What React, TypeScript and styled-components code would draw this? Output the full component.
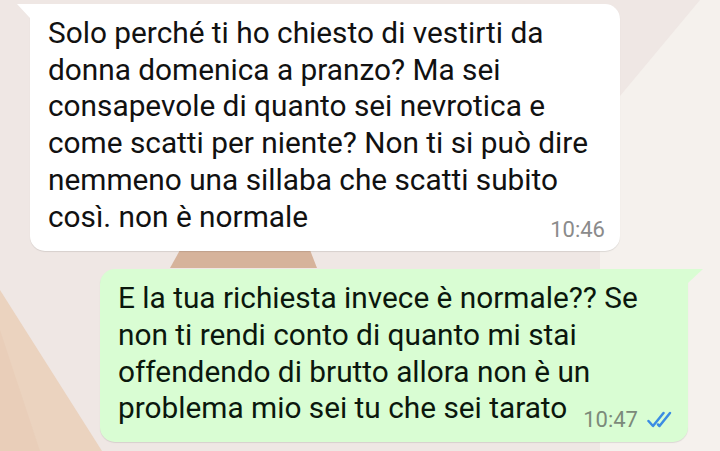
import React from "react";
import styled, { createGlobalStyle } from "styled-components";

const GlobalStyle = createGlobalStyle`
  html, body {
    margin: 0;
    padding: 0;
  }
  body {
    background: #efe7e4;
    font-family: Roboto, "Noto Sans", Arial, sans-serif;
    overflow: hidden;
  }
`;

const incoming = [
  "Solo perché ti ho chiesto di vestirti da",
  "donna domenica a pranzo? Ma sei",
  "consapevole di quanto sei nevrotica e",
  "come scatti per niente? Non ti si può dire",
  "nemmeno una sillaba che scatti subito",
  "così. non è normale",
];

const outgoing = [
  "E la tua richiesta invece è normale?? Se",
  "non ti rendi conto di quanto mi stai",
  "offendendo di brutto allora non è un",
  "problema mio sei tu che sei tarato",
];

const Wallpaper = () => (
  <Paper viewBox="0 0 720 451" preserveAspectRatio="none">
    <polygon points="700,0 720,0 720,451 600,451 600,120" fill="#f5f1ed" />
    <polygon points="180,250 310,250 317,268 170,268" fill="#d6b39b" />
    <polygon points="0,290 0,451 102,451" fill="#ebd3bf" />
    <polygon points="0,330 0,451 40,451" fill="#e7ccb6" opacity="0.6" />
  </Paper>
);

const DoubleCheck = () => (
  <Ticks viewBox="0 0 28 18">
    <polyline points="1.5,10 6,15 16.5,2" />
    <polyline points="11,13.5 12.5,15 23,2" />
  </Ticks>
);

type BubbleProps = { lines: string[]; time: string; out?: boolean };

const Bubble: React.FC<BubbleProps> = ({ lines, time, out }) => {
  const head = lines.slice(0, -1);
  const last = lines[lines.length - 1];
  return (
    <Row $out={out}>
      <Box $out={out}>
        {head.map((l) => (
          <Line key={l}>{l}</Line>
        ))}
        <LastLine>
          <Line>{last}</Line>
          <Meta $out={out}>
            <Time>{time}</Time>
            {out && <DoubleCheck />}
          </Meta>
        </LastLine>
      </Box>
    </Row>
  );
};

export default function App() {
  return (
    <>
      <GlobalStyle />
      <Screen>
        <Wallpaper />
        <Chat>
          <Bubble lines={incoming} time="10:46" />
          <Bubble lines={outgoing} time="10:47" out />
        </Chat>
      </Screen>
    </>
  );
}

const Screen = styled.div`
  position: relative;
  width: 720px;
  height: 451px;
  overflow: hidden;
`;

const Paper = styled.svg`
  position: absolute;
  inset: 0;
  width: 720px;
  height: 451px;
`;

const Chat = styled.div`
  position: relative;
  display: flex;
  flex-direction: column;
  gap: 18px;
  padding-top: 4px;
`;

const Row = styled.div<{ $out?: boolean }>`
  display: flex;
  justify-content: ${(p) => (p.$out ? "flex-end" : "flex-start")};
  padding: ${(p) => (p.$out ? "0 32px 0 0" : "0 0 0 30px")};
`;

const Box = styled.div<{ $out?: boolean }>`
  position: relative;
  box-sizing: border-box;
  width: ${(p) => (p.$out ? "588px" : "590px")};
  padding: ${(p) => (p.$out ? "11.7px 13px 11px 18px" : "11px 15px 10px 18px")};
  background: ${(p) => (p.$out ? "#d9fdd3" : "#ffffff")};
  color: ${(p) => (p.$out ? "#0b170d" : "#111111")};
  border-radius: ${(p) => (p.$out ? "15px 0 15px 15px" : "0 15px 15px 15px")};
  box-shadow: 0 1px 1px rgba(0, 0, 0, 0.1);

  &::before {
    content: "";
    position: absolute;
    top: 0;
    ${(p) => (p.$out ? "right: -15px;" : "left: -13px;")}
    width: 0;
    height: 0;
    border-top: 14px solid ${(p) => (p.$out ? "#d9fdd3" : "#ffffff")};
    ${(p) =>
      p.$out
        ? "border-right: 15px solid transparent;"
        : "border-left: 13px solid transparent;"}
  }
`;

const Line = styled.div`
  font-size: 29.8px;
  line-height: 36.7px;
  white-space: nowrap;
`;

const LastLine = styled.div`
  display: flex;
  justify-content: space-between;
  align-items: flex-start;
`;

const Meta = styled.div<{ $out?: boolean }>`
  display: flex;
  align-items: center;
  gap: 9px;
  margin-top: ${(p) => (p.$out ? "19px" : "20px")};
  color: ${(p) => (p.$out ? "#7c8a7a" : "#8b8b8b")};
`;

const Time = styled.span`
  font-size: 22px;
  line-height: 22px;
`;

const Ticks = styled.svg`
  width: 28px;
  height: 18px;
  fill: none;
  stroke: #3b8ce3;
  stroke-width: 2.5;
  stroke-linecap: round;
  stroke-linejoin: round;
`;
